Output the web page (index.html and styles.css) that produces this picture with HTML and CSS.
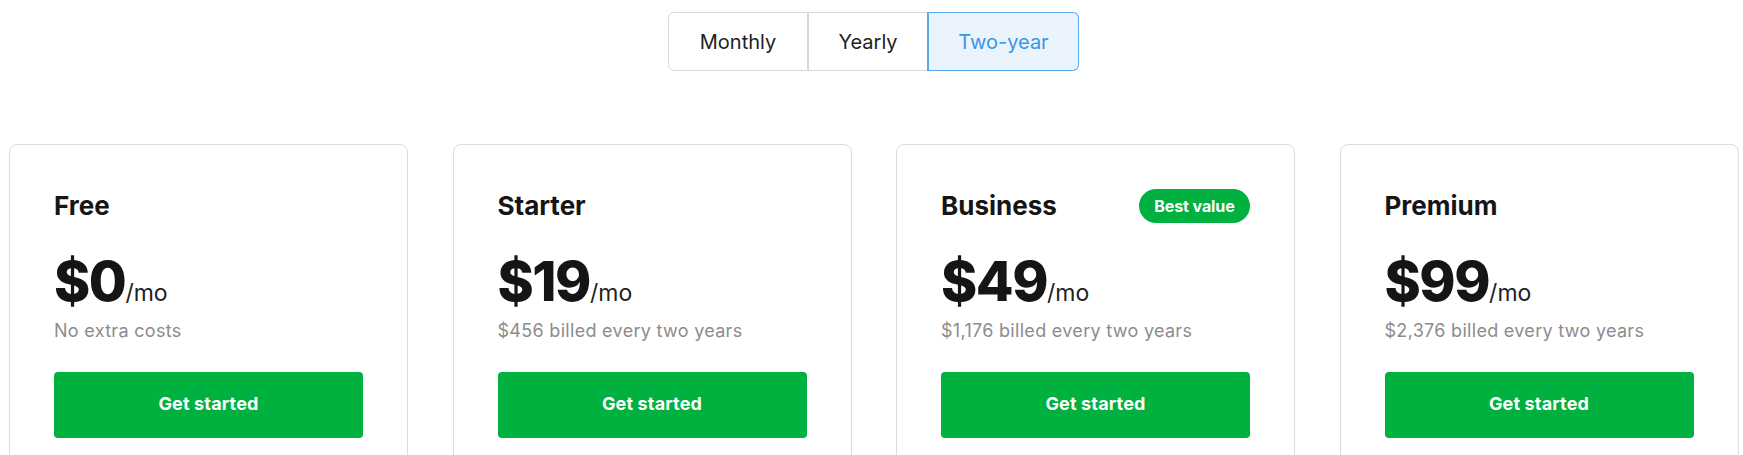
FILE: index.html
```html
<!DOCTYPE html>
<html lang="en">
<head>
<meta charset="utf-8">
<title>Pricing</title>
<link rel="stylesheet" href="styles.css">
</head>
<body>
<div class="page">
  <div class="toggle-wrap">
    <div class="toggle">
      <button class="tbtn tbtn-monthly">Monthly</button>
      <button class="tbtn tbtn-yearly">Yearly</button>
      <button class="tbtn tbtn-two active">Two-year</button>
    </div>
  </div>
  <div class="plans">
    <div class="card">
      <div class="head"><h2 class="title">Free</h2></div>
      <div class="price"><span class="amount">$0</span><span class="per">/mo</span></div>
      <p class="note">No extra costs</p>
      <a class="cta">Get started</a>
    </div>
    <div class="card">
      <div class="head"><h2 class="title">Starter</h2></div>
      <div class="price"><span class="amount">$19</span><span class="per">/mo</span></div>
      <p class="note">$456 billed every two years</p>
      <a class="cta">Get started</a>
    </div>
    <div class="card">
      <div class="head"><h2 class="title">Business</h2><span class="badge">Best value</span></div>
      <div class="price"><span class="amount">$49</span><span class="per">/mo</span></div>
      <p class="note">$1,176 billed every two years</p>
      <a class="cta">Get started</a>
    </div>
    <div class="card">
      <div class="head"><h2 class="title">Premium</h2></div>
      <div class="price"><span class="amount">$99</span><span class="per">/mo</span></div>
      <p class="note">$2,376 billed every two years</p>
      <a class="cta">Get started</a>
    </div>
  </div>
</div>
</body>
</html>
```
FILE: styles.css
```css
* { box-sizing: border-box; }
html, body { margin: 0; padding: 0; background: #fff; }
body {
  font-family: "Inter", "Lato", "Liberation Sans", sans-serif;
  color: #1a1a1a;
  overflow: hidden;
}
.page { padding: 12px 0 0 9px; }
.toggle-wrap { display: flex; justify-content: center; padding-right: 5px; }
.toggle { display: flex; height: 59px; }
.tbtn {
  font-family: inherit;
  font-size: 20px;
  color: #222;
  background: #fff;
  border: 1px solid #d9d9d9;
  padding: 0;
  margin: 0;
  cursor: pointer;
}
.tbtn-monthly { width: 140px; border-radius: 6px 0 0 6px; }
.tbtn-yearly { width: 120px; }
.tbtn-two { width: 152px; border-radius: 0 6px 6px 0; }
.tbtn.active {
  color: #3b95e8;
  background: #ebf3fd;
  border-color: #5aa8f0;
  border-left-width: 2px;
  margin-left: -1px;
}
.plans {
  display: grid;
  grid-template-columns: repeat(4, 399px);
  column-gap: 44.5px;
  margin-top: 73px;
}
.card {
  border: 1px solid #dcdcdc;
  border-radius: 8px;
  padding: 45px 44px 40px;
  min-height: 420px;
}
.head { display: flex; justify-content: space-between; align-items: center; height: 32px; }
.title { margin: 0; font-size: 26px; line-height: 32px; font-weight: 700; color: #151515; }
.badge {
  display: inline-flex;
  align-items: center;
  justify-content: center;
  width: 111px;
  height: 34px;
  border-radius: 17px;
  background: #00b140;
  color: #fff;
  font-size: 16px;
  font-weight: 700;
  letter-spacing: -0.1px;
  padding-bottom: 1px;
}
.price { margin-top: 31px; height: 56px; line-height: 56px; white-space: nowrap; }
.amount { font-size: 55px; font-weight: 800; color: #151515; letter-spacing: -1.5px; }
.per { font-size: 23px; color: #222; }
.note { margin: 10px 0 0; font-size: 18px; line-height: 24px; color: #8c8c8c; letter-spacing: 0.3px; }
.cta {
  display: flex;
  align-items: center;
  justify-content: center;
  margin-top: 29px;
  height: 66px;
  border-radius: 4px;
  background: #00b140;
  color: #fff;
  font-size: 18px;
  font-weight: 700;
  letter-spacing: 0.15px;
  padding-bottom: 4px;
  text-decoration: none;
}
```
